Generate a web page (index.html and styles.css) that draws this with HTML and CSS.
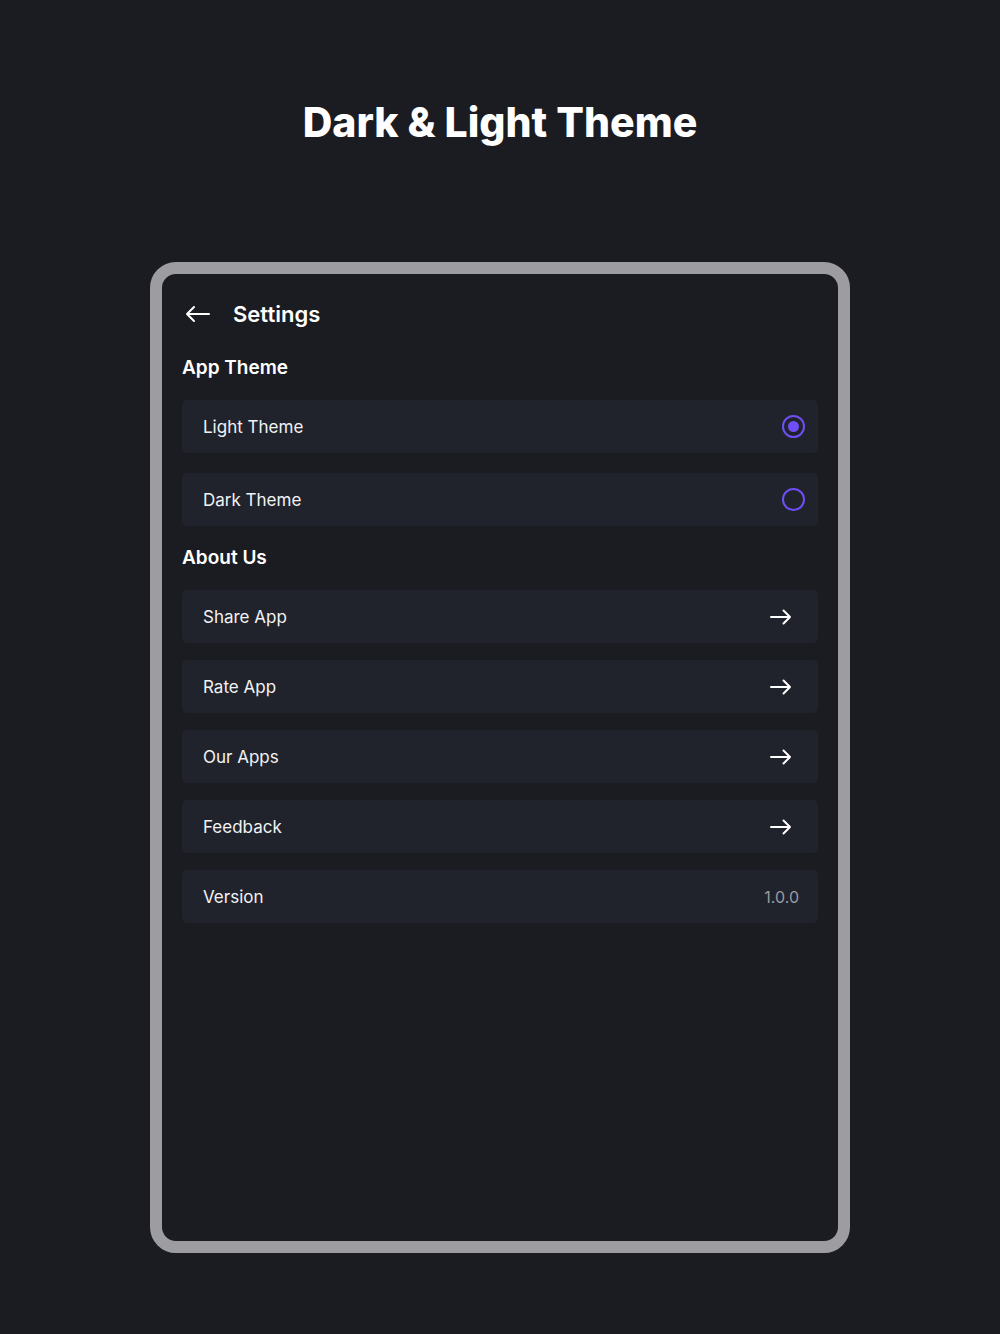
FILE: index.html
```html
<!DOCTYPE html>
<html lang="en">
<head>
<meta charset="utf-8">
<title>Dark &amp; Light Theme</title>
<link rel="stylesheet" href="styles.css">
</head>
<body>
<main class="page">
  <h1 class="title">Dark &amp; Light Theme</h1>
  <div class="device">
    <div class="screen">
      <header class="topbar">
        <svg class="back" width="26" height="18" viewBox="0 0 26 18" fill="none" stroke="#ffffff" stroke-width="2" stroke-linecap="round" stroke-linejoin="round"><path d="M24 9H2M9 2L2 9l7 7"/></svg>
        <span class="topbar-title">Settings</span>
      </header>

      <h2 class="section">App Theme</h2>
      <div class="list">
        <div class="row"><span class="label">Light Theme</span><span class="radio checked"></span></div>
        <div class="row"><span class="label">Dark Theme</span><span class="radio"></span></div>
      </div>

      <h2 class="section section-about">About Us</h2>
      <div class="list list-about">
        <div class="row"><span class="label">Share App</span><svg class="arrow" width="22" height="16" viewBox="0 0 22 16" fill="none" stroke="#ffffff" stroke-width="2" stroke-linecap="round" stroke-linejoin="round"><path d="M1 8h19M13.5 1.5L20 8l-6.5 6.5"/></svg></div>
        <div class="row"><span class="label">Rate App</span><svg class="arrow" width="22" height="16" viewBox="0 0 22 16" fill="none" stroke="#ffffff" stroke-width="2" stroke-linecap="round" stroke-linejoin="round"><path d="M1 8h19M13.5 1.5L20 8l-6.5 6.5"/></svg></div>
        <div class="row"><span class="label">Our Apps</span><svg class="arrow" width="22" height="16" viewBox="0 0 22 16" fill="none" stroke="#ffffff" stroke-width="2" stroke-linecap="round" stroke-linejoin="round"><path d="M1 8h19M13.5 1.5L20 8l-6.5 6.5"/></svg></div>
        <div class="row"><span class="label">Feedback</span><svg class="arrow" width="22" height="16" viewBox="0 0 22 16" fill="none" stroke="#ffffff" stroke-width="2" stroke-linecap="round" stroke-linejoin="round"><path d="M1 8h19M13.5 1.5L20 8l-6.5 6.5"/></svg></div>
        <div class="row"><span class="label">Version</span><span class="version">1.0.0</span></div>
      </div>
    </div>
  </div>
</main>
</body>
</html>
```

FILE: styles.css
```css
* { box-sizing: border-box; }
html, body { margin: 0; padding: 0; }
body {
  background: #1b1c21;
  color: #ffffff;
  font-family: "Inter", "Noto Sans", sans-serif;
  width: 1000px;
  height: 1334px;
  overflow: hidden;
}
.page {
  display: flex;
  flex-direction: column;
  align-items: center;
}
.title {
  margin: 96px 0 0 0;
  font-size: 41px;
  line-height: 52px;
  font-weight: 800;
  letter-spacing: 0;
  color: #ffffff;
}
.device {
  margin-top: 114px;
  width: 700px;
  height: 991px;
  border: 12px solid #9d9ca1;
  border-radius: 26px;
  background: #1b1c21;
}
.screen {
  padding: 20px 20px 0 20px;
  display: flex;
  flex-direction: column;
}
.topbar {
  display: flex;
  align-items: center;
  height: 40px;
}
.back { margin-left: 3px; margin-right: 22px; }
.topbar-title {
  font-size: 22px;
  font-weight: 600;
  color: #ffffff;
}
.section {
  margin: 22px 0 0 0;
  font-size: 19px;
  line-height: 24px;
  font-weight: 600;
  color: #ffffff;
}
.section-about { margin-top: 20px; }
.list {
  display: flex;
  flex-direction: column;
  gap: 20px;
  margin-top: 20px;
}
.list-about { gap: 17px; margin-top: 20px; }
.row {
  height: 53px;
  background: #21232c;
  border-radius: 5px;
  display: flex;
  align-items: center;
  justify-content: space-between;
  padding: 0 19px 0 21px;
}
.label {
  font-size: 17px;
  color: #f2f2f4;
}
.radio {
  width: 23px;
  height: 23px;
  border-radius: 50%;
  border: 2.5px solid #6f4ff5;
  margin-right: -6px;
  display: flex;
  align-items: center;
  justify-content: center;
}
.radio.checked::after {
  content: "";
  width: 11px;
  height: 11px;
  border-radius: 50%;
  background: #6f4ff5;
}
.arrow { margin-right: 7px; }
.version {
  font-size: 16px;
  color: #9a9aa1;
}
```
